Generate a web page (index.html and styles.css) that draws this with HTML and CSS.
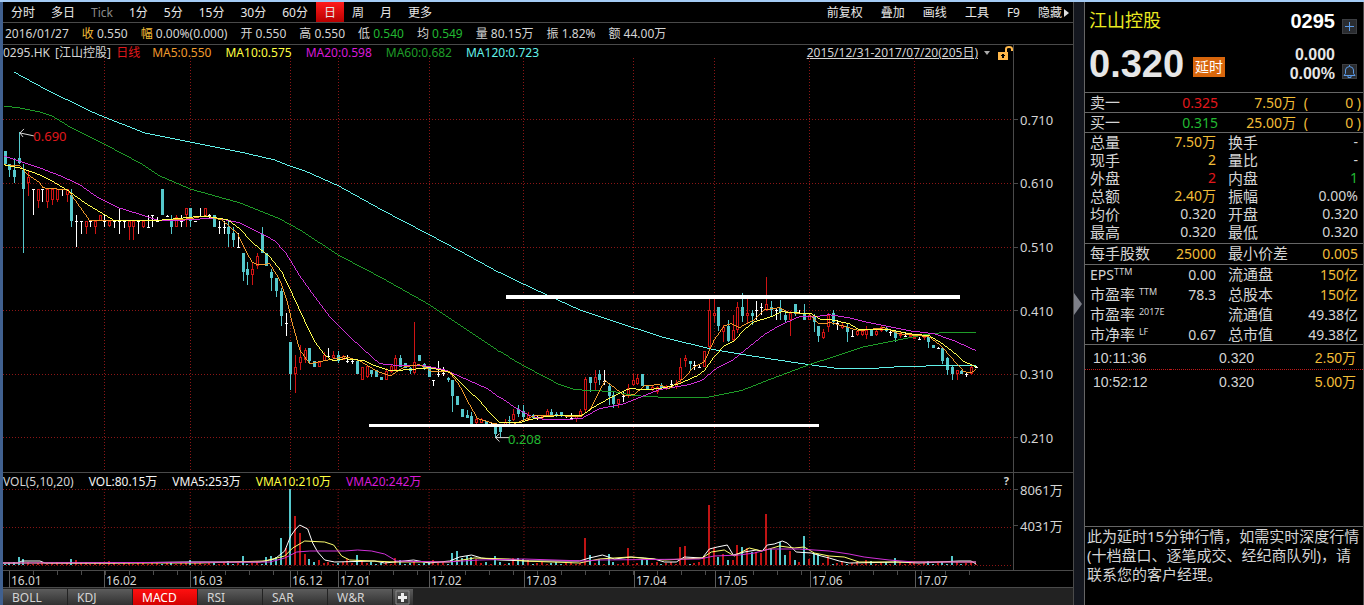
FILE: index.html
```
<!DOCTYPE html>
<html lang="zh-CN">
<head>
    <meta charset="UTF-8">
    <meta name="viewport" content="width=device-width, initial-scale=1.0">
    <title>江山控股 0295.HK</title>
    <link rel="stylesheet" href="styles.css">
</head>
<body>

<div class="terminal">
    <main class="chart-side">
        <nav class="toolbar">
            <div class="periods">
                <button>分时</button>
                <button>多日</button>
                <button class="dim">Tick</button>
                <button>1分</button>
                <button>5分</button>
                <button>15分</button>
                <button>30分</button>
                <button>60分</button>
                <button class="active">日</button>
                <button>周</button>
                <button>月</button>
                <button>更多</button>
            </div>
            <div class="tools">
                <button>前复权</button>
                <button>叠加</button>
                <button>画线</button>
                <button>工具</button>
                <button>F9</button>
                <button>隐藏<svg class="arrow" viewBox="0 0 5 8"><path d="M0 0L5 4L0 8Z" fill="#ddd"/></svg></button>
            </div>
        </nav>

        <div class="day-info">
            <span>2016/01/27</span>
            <span><b class="gold">收</b> 0.550</span>
            <span><b class="gold">幅</b> 0.00%(0.000)</span>
            <span><b>开</b> 0.550</span>
            <span><b>高</b> 0.550</span>
            <span><b>低</b> <i class="green">0.540</i></span>
            <span><b>均</b> <i class="green">0.549</i></span>
            <span><b>量</b> 80.15万</span>
            <span><b>振</b> 1.82%</span>
            <span><b>额</b> 44.00万</span>
        </div>

        <section class="panel price-panel">
            <div class="plot">
                <div class="legend">
                    <span class="stock">0295.HK [江山控股] <i class="red">日线</i></span>
                    <span class="ma5">MA5:0.550</span>
                    <span class="ma10">MA10:0.575</span>
                    <span class="ma20">MA20:0.598</span>
                    <span class="ma60">MA60:0.682</span>
                    <span class="ma120">MA120:0.723</span>
                    <a class="range" href="#">2015/12/31-2017/07/20(205日)</a>
                    <svg class="caret" viewBox="0 0 6 4"><path d="M0 0H6L3 4Z" fill="#aaa"/></svg>
                    <svg class="lock" viewBox="0 0 15 14">
                        <path d="M8 6V3Q8 1 11 1Q14 1 14 3V5" fill="none" stroke="#ffb84a" stroke-width="2"/>
                        <path d="M0 6H10V14H0Z" fill="#ffb84a"/>
                        <path d="M4 8H6V12H4ZM3 9H7V10H3Z" fill="#000"/>
                    </svg>
                </div>
                <svg id="priceChart" class="chart" viewBox="3 61 1011 411" preserveAspectRatio="none"></svg>
                <span class="mark mark-high">0.690</span>
                <span class="mark mark-low">0.208</span>
            </div>
            <div class="axis price-axis">
                <span>0.710</span>
                <span>0.610</span>
                <span>0.510</span>
                <span>0.410</span>
                <span>0.310</span>
                <span>0.210</span>
            </div>
        </section>

        <section class="panel volume-panel">
            <div class="plot">
                <div class="legend vol-legend">
                    <span>VOL(5,10,20)</span>
                    <span class="white">VOL:80.15万</span>
                    <span class="white">VMA5:253万</span>
                    <span class="ma10">VMA10:210万</span>
                    <span class="ma20">VMA20:242万</span>
                    <button class="help">?</button>
                </div>
                <svg id="volumeChart" class="chart" viewBox="3 489 1011 81" preserveAspectRatio="none"></svg>
            </div>
            <div class="axis volume-axis">
                <span>8061万</span>
                <span>4031万</span>
            </div>
        </section>

        <div class="time-row">
            <div class="time-axis">
                <span>16.01</span>
                <span>16.02</span>
                <span>16.03</span>
                <span>16.12</span>
                <span>17.01</span>
                <span>17.02</span>
                <span>17.03</span>
                <span>17.04</span>
                <span>17.05</span>
                <span>17.06</span>
                <span>17.07</span>
            </div>
        </div>

        <div class="indicators">
            <button>BOLL</button>
            <button>KDJ</button>
            <button class="active">MACD</button>
            <button>RSI</button>
            <button>SAR</button>
            <button>W&amp;R</button>
            <button class="add" aria-label="添加"><svg viewBox="0 0 15 15"><path d="M1 1H14V14H1Z" fill="none" stroke="#888"/><path d="M6 3H9V6H12V9H9V12H6V9H3V6H6Z" fill="#eee"/></svg></button>
        </div>
    </main>

    <div class="splitter"><svg viewBox="0 0 8 22"><path d="M0 0L8 11L0 22Z" fill="#7d7f88"/></svg></div>

    <aside class="quote">
        <header class="quote-head">
            <div class="head-row">
                <h1>江山控股</h1>
                <strong class="code">0295</strong>
                <button class="icon-btn" aria-label="加自选"><svg viewBox="0 0 15 15"><path d="M7.5 3V12M3 7.5H12" stroke="#5b9be8" fill="none"/></svg></button>
            </div>
            <div class="head-row">
                <strong class="price">0.320</strong>
                <span class="delay">延时</span>
                <strong class="change">0.000<br>0.00%</strong>
                <button class="icon-btn bell" aria-label="提醒"><svg viewBox="0 0 15 15"><path d="M2 11.5H13L11.5 9.5V6Q11.5 3 7.5 2.5Q3.5 3 3.5 6V9.5ZM7.5 1V2.5M6 12V13.5H9V12" stroke="#5b9be8" fill="none"/></svg></button>
            </div>
        </header>

        <table class="orders">
            <tr><td>卖一</td><td class="red">0.325</td><td class="gold">7.50万</td><td class="gold">(</td><td class="gold">0 )</td></tr>
            <tr><td>买一</td><td class="green">0.315</td><td class="gold">25.00万</td><td class="gold">(</td><td class="gold">0 )</td></tr>
        </table>

        <table class="stats">
            <tr><td>总量</td><td class="gold">7.50万</td><td>换手</td><td>-</td></tr>
            <tr><td>现手</td><td class="gold">2</td><td>量比</td><td>-</td></tr>
            <tr><td>外盘</td><td class="red">2</td><td>内盘</td><td class="green">1</td></tr>
            <tr><td>总额</td><td class="gold">2.40万</td><td>振幅</td><td>0.00%</td></tr>
            <tr><td>均价</td><td>0.320</td><td>开盘</td><td>0.320</td></tr>
            <tr><td>最高</td><td>0.320</td><td>最低</td><td>0.320</td></tr>
        </table>

        <table class="stats tall">
            <tr><td>每手股数</td><td class="gold">25000</td><td>最小价差</td><td class="gold">0.005</td></tr>
        </table>

        <table class="stats tall">
            <tr><td><span class="eps">EPS</span><sup>TTM</sup></td><td>0.00</td><td>流通盘</td><td class="gold">150亿</td></tr>
            <tr><td>市盈率 <sup>TTM</sup></td><td>78.3</td><td>总股本</td><td class="gold">150亿</td></tr>
            <tr><td>市盈率 <sup>2017E</sup></td><td></td><td>流通值</td><td>49.38亿</td></tr>
            <tr><td>市净率 <sup>LF</sup></td><td>0.67</td><td>总市值</td><td>49.38亿</td></tr>
        </table>

        <table class="trades">
            <tr><td>10:11:36</td><td>0.320</td><td class="gold">2.50万</td></tr>
            <tr><td>10:52:12</td><td>0.320</td><td class="gold">5.00万</td></tr>
        </table>

        <p class="notice">此为延时15分钟行情，如需实时深度行情(十档盘口、逐笔成交、经纪商队列)，请联系您的客户经理。</p>
    </aside>
</div>

<script src="chart.js"></script>
</body>
</html>
```
FILE: styles.css
```
* {
    box-sizing: border-box;
}
body {
    margin: 0;
    background: #000;
    color: #d4d4d4;
    font-family: "Noto Sans", "Noto Sans CJK SC", sans-serif;
    font-size: 12px;
}
button {
    font: inherit;
    color: inherit;
    background: none;
    border: none;
    padding: 0;
    cursor: pointer;
}
b, i {
    font-weight: normal;
    font-style: normal;
}
svg {
    display: block;
}
.gold { color: #f2bd38; }
.red { color: #e0181c; }
.green { color: #22b832; }
.white { color: #f4f4f4; }
.ma5 { color: #f09a2c; }
.ma10 { color: #ffff40; }
.ma20 { color: #d81ad8; }
.ma60 { color: #1f9c28; }
.ma120 { color: #62f2ea; }

.terminal {
    display: flex;
    min-height: 100vh;
    border-top: 2px solid #a4cbf5;
}
.chart-side {
    flex: 1;
    min-width: 0;
    display: flex;
    flex-direction: column;
    border-left: 3px solid #40608f;
    border-right: 1px solid #4a4a4a;
}

/* toolbar */
.toolbar {
    display: flex;
    justify-content: space-between;
    height: 21px;
    border-bottom: 1px solid #4a4a4a;
    color: #e8e8e8;
}
.periods, .tools {
    display: flex;
}
.toolbar button {
    padding: 2px 8px 0;
    line-height: 18px;
    white-space: nowrap;
}
.tools {
    padding-right: 4px;
}
.tools button {
    display: flex;
    align-items: center;
    padding: 2px 9px 0;
}
.tools button:last-child {
    padding-right: 0;
}
.toolbar .dim {
    color: #8a8a8a;
}
.toolbar .active {
    background: linear-gradient(#ff1a1a, #b80000);
}
.arrow {
    width: 5px;
    height: 8px;
    margin-left: 2px;
}
.day-info {
    display: flex;
    gap: 13px;
    height: 22px;
    padding-left: 2px;
    line-height: 22px;
    border-bottom: 1px solid #4a4a4a;
    white-space: nowrap;
}

/* charts */
.panel {
    display: flex;
    border-bottom: 1px solid #4a4a4a;
}
.price-panel {
    flex: 1;
    min-height: 300px;
}
.volume-panel {
    height: 98px;
}
.plot {
    position: relative;
    flex: 1;
    min-width: 0;
    display: flex;
    flex-direction: column;
    border-right: 1px solid #4a4a4a;
}
.legend {
    display: flex;
    gap: 14px;
    height: 16px;
    line-height: 16px;
    white-space: nowrap;
}
.legend .stock {
    margin-right: -2px;
    word-spacing: 2px;
}
.range {
    margin-left: auto;
    color: #d4d4d4;
}
.caret {
    width: 6px;
    height: 4px;
    margin: 6px -6px 0 -8px;
}
.lock {
    width: 15px;
    height: 14px;
    margin-top: 1px;
}
.vol-legend {
    gap: 15px;
    line-height: 18px;
}
.vol-legend .help {
    margin: 0 4px 0 auto;
    font-size: 11px;
    font-weight: bold;
    line-height: 14px;
}
.chart {
    flex: 1;
    width: 100%;
    min-height: 0;
    height: 0;
    overflow: visible;
}
.mark {
    position: absolute;
    font-size: 13px;
    line-height: 12px;
}
.mark-high {
    left: 3%;
    top: 20%;
    color: #e0181c;
}
.mark-low {
    left: 50%;
    top: 91%;
    color: #22b832;
}
.axis {
    width: 59px;
    display: grid;
    font-size: 13px;
}
.axis span {
    display: flex;
    align-items: center;
}
.axis span::before {
    content: "";
    width: 4px;
    height: 1px;
    margin-right: 2px;
    background: #4a4a4a;
}
.price-axis {
    grid-template-rows: 430fr repeat(6, 637fr) 18fr;
}
/* fills the short row above the first price */
.price-axis::before {
    content: "";
}
.volume-axis {
    align-content: start;
    grid-template-rows: 34px 38px;
}
.time-row {
    display: flex;
    height: 17px;
    padding-right: 59px;
    border-bottom: 1px solid #4a4a4a;
    background: repeating-linear-gradient(90deg, transparent 0 6px, #4a4a4a 6px 7px, transparent 7px 24px) 0 0 / 970px 4px no-repeat;
}
.time-axis {
    flex: 1;
    display: grid;
    grid-template-columns: 95fr 86fr 100fr 48fr 91fr 95fr 110fr 81fr 95fr 105fr 99fr;
    padding-left: 6px;
}
.time-axis span {
    padding-left: 1px;
    line-height: 20px;
    border-left: 1px solid #5a5a5a;
}

/* indicator tabs */
.indicators {
    display: flex;
    gap: 1px;
    height: 18px;
    padding-top: 1px;
    background: #222;
}
.indicators button {
    width: 65px;
    padding-left: 9px;
    text-align: left;
    line-height: 18px;
    background: linear-gradient(#5c5c5c, #2e2e2e);
}
.indicators .active {
    color: #fff;
    background: linear-gradient(#ff1010, #d00000);
}
.indicators .add {
    width: 20px;
    padding-left: 2px;
}
.indicators button:not(.add) {
    width: 64px;
}
.add svg {
    width: 15px;
    height: 15px;
}

.splitter {
    width: 11px;
    display: flex;
    align-items: center;
    border-right: 1px solid #666;
    background: #14171f;
}
.splitter svg {
    width: 8px;
    height: 22px;
}

/* quote panel */
.quote {
    width: 279px;
    display: flex;
    flex-direction: column;
    border-right: 1px solid #4a4a4a;
    font-size: 14px;
}
.quote-head {
    height: 90px;
    padding: 4px 6px 0 4px;
    font-family: "Liberation Sans", "Noto Sans CJK SC", sans-serif;
}
.head-row {
    display: flex;
    align-items: center;
}
.head-row h1 {
    margin: 0 auto 0 0;
    font-size: 18px;
    font-weight: normal;
    line-height: 30px;
    color: #eaea20;
}
.code {
    font-size: 20px;
    color: #fff;
}
.price {
    font-size: 38px;
    line-height: 56px;
}
.price, .change {
    color: #e6e6e6;
}
.delay {
    margin: 6px auto 0 9px;
    padding: 0 2px;
    line-height: 20px;
    background: #d8660c;
    color: #fff;
}
.change {
    font-size: 16px;
    line-height: 19px;
    text-align: right;
}
.icon-btn {
    width: 15px;
    height: 15px;
    margin: 10px 0 0 7px;
    background: #2a2c30;
    outline: 1px solid #3c3e42;
    outline-offset: -1px;
}
.bell {
    margin-top: 14px;
}
table {
    width: 100%;
    table-layout: fixed;
    border-collapse: collapse;
    border-top: 1px solid #666;
}
td {
    padding: 0;
    height: 18px;
    line-height: 18px;
    white-space: nowrap;
    text-align: right;
}
td:first-child {
    padding-left: 5px;
    text-align: left;
}
.orders td:first-child,
.stats td:nth-child(odd) {
    font-size: 15px;
}
.orders td {
    height: 20px;
    line-height: 19px;
    border-bottom: 1px solid #666;
}
.orders td:nth-child(1) { width: 60px; }
.orders td:nth-child(2) { width: 73px; }
.orders td:nth-child(3) { width: 78px; }
.orders td:nth-child(4) { width: 12px; }
.orders td:nth-child(5) { padding-right: 2px; }
.orders + .stats {
    border-top: none;
    margin-bottom: 2px;
}
.stats td:nth-child(1) { width: 76px; }
.stats td:nth-child(2) { width: 55px; }
.stats td:nth-child(3) {
    width: 72px;
    padding-left: 12px;
    text-align: left;
}
.stats td:nth-child(4) { padding-right: 5px; }
.tall td {
    height: 20px;
    line-height: 19px;
}
.eps {
    font-size: 14px;
}
sup {
    font-size: 9px;
    line-height: 0;
    vertical-align: 5px;
}
.trades {
    margin-bottom: auto;
    font-family: "Liberation Sans", "Noto Sans CJK SC", sans-serif;
}
.trades td {
    height: 24px;
    line-height: 24px;
}
.trades tr:first-child td {
    padding-top: 2px;
    line-height: 22px;
    border-bottom: 1px dotted #c01818;
}
.trades td:first-child {
    width: 85px;
    padding-left: 8px;
}
.trades td:nth-child(2) {
    width: 84px;
}
.trades td:last-child {
    padding-right: 7px;
}
.notice {
    height: 80px;
    margin: 0;
    padding: 0 2px;
    border-top: 1px solid #666;
    font-size: 15px;
    line-height: 19px;
}
```
FILE: chart.js
```
// x, high, low, body top, body bottom, kind (r = up, c = down, w = flat)
const candles = `
5 151 164 151 164 c|9 164 177 164 170 c|14 158 183 170 177 c|19 132 164 158 163 c|23 164 253 170 189 c
28 170 196 177 183 r|33 189 215 189 189 w|38 189 208 189 201 r|42 189 202 189 189 w|47 189 208 189 202 r
52 189 205 189 200 r|57 189 202 189 200 r|62 189 196 189 189 w|67 189 202 189 195 r|71 189 227 195 221 c
76 215 247 221 221 w|81 221 234 221 221 w|86 221 234 221 227 r|90 221 227 221 221 w|95 221 234 221 227 r
100 215 221 215 221 r|104 215 227 221 221 w|109 221 227 221 226 r|114 221 228 221 221 w|119 208 234 221 221 w
124 221 228 221 221 w|129 221 240 221 227 r|133 221 240 221 227 r|138 221 234 221 221 w|143 221 228 221 227 r
148 215 228 227 227 w|152 215 227 215 215 w|157 217 222 221 221 w|162 189 215 189 215 c|167 215 217 216 216 w
171 215 234 220 227 c|176 215 227 217 227 r|181 215 227 221 221 w|186 208 227 208 215 r|190 208 227 208 221 c
195 221 222 221 221 w|200 208 217 216 216 w|205 208 217 208 216 r|209 214 218 215 215 w|214 215 227 215 227 c
219 221 234 227 227 w|224 221 234 227 227 w|228 221 247 227 234 c|233 227 247 233 240 c|238 233 247 247 247 w
243 253 281 253 272 c|247 262 285 269 275 c|252 262 285 269 275 r|257 253 269 256 266 r|262 227 253 234 253 c
266 253 266 253 266 c|271 269 291 272 278 c|276 278 297 278 291 c|281 288 326 291 316 c|286 313 336 323 323 w
290 342 390 342 374 c|295 355 393 367 374 r|300 345 370 357 363 r|305 348 363 350 360 r|309 348 363 348 361 c
314 361 367 361 367 c|319 362 367 362 367 r|324 352 361 355 361 r|328 348 356 356 356 w|333 351 358 355 358 r
338 351 363 355 361 c|343 355 360 356 360 r|347 355 363 361 361 w|352 360 364 361 361 w|357 361 374 361 374 c
362 367 380 367 380 r|367 365 378 366 377 r|371 370 377 370 374 c|376 370 377 370 377 c|381 377 380 377 380 c
386 368 380 371 380 r|391 365 373 366 372 r|395 355 370 358 370 r|400 355 367 358 367 c|405 363 368 363 368 c
410 367 374 368 371 c|414 322 374 362 373 r|419 355 361 355 361 c|424 363 370 364 369 c|429 367 377 368 377 c
433 380 386 380 380 w|438 361 377 374 374 w|443 367 376 373 373 w|448 377 382 378 380 c|452 380 412 380 396 c
457 396 405 396 405 c|462 409 417 409 417 c|467 410 418 415 418 c|471 412 424 416 424 c|476 418 424 419 423 r
481 418 423 419 423 r|486 421 424 421 424 c|491 422 425 424 424 w|495 427 438 427 434 c|500 427 437 427 432 c
505 419 427 422 427 r|510 416 424 420 421 c|514 409 421 414 420 r|519 405 417 409 414 c|524 405 421 411 417 c
529 412 421 415 420 r|534 414 418 415 418 c|538 415 420 418 418 w|543 415 419 416 418 r|548 409 417 411 416 r
552 409 417 412 416 c|557 412 417 414 416 c|562 412 417 412 416 c|567 415 418 416 416 w|572 413 419 418 418 w
577 415 422 416 419 r|581 409 417 411 416 r|586 377 413 379 410 r|591 377 392 377 383 c|596 370 390 377 383 r
600 370 385 374 380 c|605 370 385 381 381 w|610 383 405 386 396 c|614 392 408 395 404 c|619 399 408 399 404 r
624 392 402 396 396 w|629 384 398 388 396 r|634 374 386 380 385 r|638 374 385 378 384 r|643 374 386 374 386 c
648 386 390 386 390 c|653 386 391 387 390 r|658 386 394 387 392 r|662 383 390 385 388 c|667 385 390 386 389 r
672 380 387 384 384 w|677 380 389 383 387 r|681 358 384 367 380 r|686 355 367 358 361 r|691 361 370 361 364 c
695 361 370 365 365 w|700 365 368 367 367 w|705 351 367 351 367 r|710 298 348 310 347 r|715 298 323 313 316 r
719 307 331 307 326 c|724 325 342 327 332 r|729 320 342 326 341 c|734 315 341 330 340 r|738 302 333 307 330 r
743 293 322 307 316 c|748 298 323 313 316 r|753 310 325 313 316 c|757 301 320 310 310 w|762 303 315 307 307 w
767 277 311 304 310 r|772 301 316 307 310 c|777 309 320 310 310 w|781 300 320 308 312 c|786 311 323 315 320 c
791 311 336 313 320 r|796 304 316 304 314 c|800 310 314 313 313 w|805 304 320 313 320 c|810 314 320 315 320 r
815 314 332 317 322 c|819 326 342 326 336 c|824 329 339 332 338 r|829 313 332 315 327 r|834 310 325 313 322 c
838 320 330 323 323 w|843 323 329 325 328 r|848 324 342 327 332 c|853 330 337 336 336 w|858 330 336 331 335 r
863 330 336 331 335 r|867 326 339 330 335 r|872 329 336 330 336 c|877 330 336 331 335 r|882 325 332 327 331 r
887 326 332 328 331 c|891 331 336 332 332 w|896 331 342 332 338 c|901 332 338 334 336 r|906 333 337 336 336 w
911 334 338 335 337 r|915 336 339 337 339 r|920 337 340 339 339 w|925 335 340 336 338 r|929 336 348 337 342 c
934 345 348 345 348 c|939 347 349 348 348 w|943 347 364 348 361 c|948 357 375 358 370 c|953 366 380 367 374 c
958 370 380 370 374 r|962 370 374 371 374 c|967 373 377 374 374 w|972 366 375 367 374 r|977 366 368 367 367 w
`.trim().split(/[|\n]/).map(row => row.split(" "));

// bar heights that rise above the usual quiet day
const volumes = {
    19: 8, 23: 6, 71: 6, 76: 5, 109: 4, 190: 5, 228: 4, 243: 9, 266: 8, 271: 9, 276: 8, 281: 27, 286: 17,
    290: 76, 295: 49, 300: 32, 305: 11, 309: 6, 319: 5, 347: 6, 357: 10, 362: 4, 395: 7, 400: 5, 414: 4,
    433: 5, 452: 12, 457: 14, 462: 7, 467: 9, 471: 8, 476: 6, 495: 9, 514: 7, 519: 7, 524: 6, 529: 5,
    586: 27, 591: 10, 600: 6, 610: 11, 629: 17, 643: 6, 648: 6, 681: 18, 686: 19, 705: 8, 710: 60,
    715: 17, 719: 8, 724: 11, 729: 5, 734: 5, 738: 20, 743: 18, 748: 17, 753: 13, 757: 13, 762: 12,
    767: 51, 772: 16, 777: 15, 781: 23, 786: 10, 791: 14, 796: 5, 805: 29, 810: 6, 815: 12, 819: 11,
    829: 9, 867: 5, 872: 4, 896: 7, 929: 4, 953: 9
};

const months = [104, 190, 290, 338, 429, 524, 634, 715, 810, 915];
const colors = { r: "#d01414", c: "#55c8cc", w: "#ffffff" };

const priceLines = {
    "#62f2ea": "14,72 45,89 90,111 104,117 145,133 190,142 240,152 275,160 290,166 305,171 339,186 382,210 430,235 460,251 500,273 547,295 580,310 625,325 665,338 715,350 745,355 770,359 810,365 840,369 870,369 900,367 940,366 977,366",
    "#1f9c28": "4,106 20,108 40,112 52,116 70,127 104,144 140,163 160,176 190,189 240,203 280,219 300,230 340,256 382,278 430,305 460,325 500,352 524,366 560,385 576,390 615,392 635,396 670,398 706,398 742,391 770,380 810,365 865,347 900,340 925,335 942,333 977,333",
    "#d030d8": "4,156 25,163 40,168 63,177 80,185 97,197 119,208 148,217 160,221 190,220 215,218 240,223 262,234 275,241 286,253 300,276 310,290 330,317 350,337 372,357 380,364 400,366 425,366 445,370 463,378 488,389 500,398 516,408 530,416 545,420 560,420 582,419 600,409 625,404 645,396 660,390 690,385 704,380 715,370 734,360 745,351 765,335 780,326 800,317 815,317 830,315 850,318 870,323 910,331 935,334 955,341 977,351",
    "#f09a2c": "4,165 20,166 28,175 40,183 43,188 68,190 75,200 90,221 108,221 150,221 165,220 190,219 205,216 222,220 238,234 243,245 252,262 258,265 270,264 280,280 287,300 293,325 300,350 310,364 325,361 345,357 360,361 378,372 391,376 405,367 420,365 433,372 450,372 460,386 470,405 478,419 495,424 508,427 520,422 535,416 555,416 582,417 592,408 600,391 606,381 615,388 625,396 635,395 645,386 660,385 670,389 685,378 695,367 705,362 715,340 725,326 732,324 740,328 755,320 765,310 780,308 790,313 810,314 820,324 832,323 850,328 860,331 885,328 900,334 930,337 942,346 955,361 965,372 972,373 977,370",
    "#ffff50": "4,165 20,168 40,175 52,181 67,190 85,203 100,212 115,221 148,221 165,220 195,217 210,217 228,220 240,229 253,243 270,257 282,272 292,293 303,317 315,342 325,355 333,361 345,359 365,361 375,366 391,371 410,370 430,368 445,371 452,374 465,387 480,401 490,413 500,423 520,423 530,420 545,417 560,416 582,416 595,407 615,396 630,389 650,390 665,388 680,384 698,376 705,371 715,357 725,346 735,341 745,330 755,322 772,317 782,312 795,313 812,314 822,320 832,320 850,324 860,330 890,330 910,334 930,336 942,343 955,353 965,362 977,367"
};
const volumeLines = {
    "#ffffff": "3,563 18,563 22,561 40,561 45,563 110,563 190,562 260,562 275,559 285,551 291,536 296,529 300,525 308,529 313,543 318,552 325,560 335,562 375,561 385,563 414,560 430,563 450,561 460,557 472,555 482,558 500,560 530,561 580,561 590,558 603,555 615,559 632,557 645,558 655,559 665,562 677,562 685,557 703,558 710,549 718,547 728,545 734,555 745,552 757,550 763,551 768,545 775,544 783,541 788,543 797,552 812,553 822,556 830,558 840,561 850,563 900,562 920,563 960,561 972,561 977,564",
    "#ffff70": "3,563 200,563 265,561 285,556 293,548 305,541 325,542 334,545 342,556 350,560 395,562 450,562 475,558 510,559 525,561 580,563 600,559 630,557 665,560 703,558 712,552 725,550 735,556 750,548 762,551 770,549 780,546 795,548 805,547 815,553 830,556 845,557 860,562 977,562",
    "#d030d8": "3,563 270,562 285,558 297,552 310,551 345,551 358,550 372,551 385,554 397,561 445,562 480,560 525,559 585,561 600,560 700,559 715,556 740,555 755,553 770,549 800,549 830,551 850,554 865,557 890,560 915,562 977,562"
};

function box(x, y, w, h, fill) {
    return `<rect x="${x}" y="${y}" width="${w}" height="${h}" fill="${fill}"/>`;
}

function grid(rows, top, bottom) {
    let d = "";
    rows.forEach(y => d += `M3 ${y + 0.5}H1014`);
    months.forEach(x => d += `M${x + 0.5} ${top}V${bottom}`);
    return `<path d="${d}" fill="none" stroke="#8c1616" stroke-dasharray="1 2"/>`;
}

function lines(set) {
    return Object.keys(set).map(c => `<polyline points="${set[c]}" fill="none" stroke="${c}"/>`).join("");
}

function candle([x, high, low, top, bottom, kind]) {
    [x, high, low, top, bottom] = [x, high, low, top, bottom].map(Number);
    const color = colors[kind];
    const wick = box(x, high, 1, low - high, color);
    if (kind === "w") {
        return wick + box(x - 1, top, 3, 1, color);
    }
    if (kind === "c") {
        return wick + box(x - 1, top, 3, bottom - top, color);
    }
    return wick + box(x - 1, top, 3, bottom - top, color) + box(x, top + 1, 1, Math.max(bottom - top - 2, 0), "#000");
}

document.getElementById("priceChart").innerHTML =
    '<g shape-rendering="crispEdges">' +
    grid([119, 183, 247, 310, 374, 437], 58, 472) +
    candles.map(candle).join("") +
    lines(priceLines) +
    box(506, 295, 455, 4, "#fff") +
    box(369, 424, 451, 3, "#fff") +
    "</g>" +
    '<path d="M34 136L20 133M24 129L20 133L23 137M510 438H496M500 434L496 438L500 442" fill="none" stroke="#ddd"/>';

document.getElementById("volumeChart").innerHTML =
    '<g shape-rendering="crispEdges">' +
    grid([489, 527, 565], 489, 570) +
    candles.map(([x, , , , , kind], i) => {
        const h = volumes[x] || 1 + i * 7 % 3;
        return box(x - 1, 565 - h, 2, h, kind === "c" ? colors.c : "#c01414");
    }).join("") +
    lines(volumeLines) +
    "</g>";
```
